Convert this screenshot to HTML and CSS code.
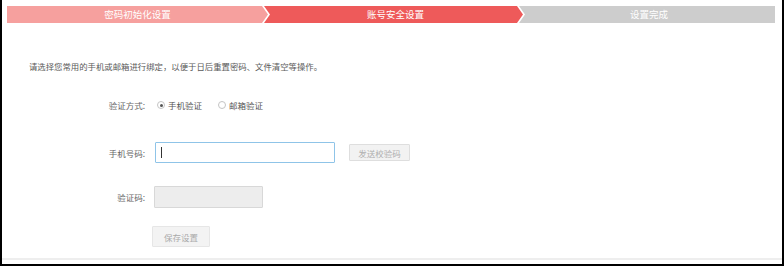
FILE: index.html
```html
<!DOCTYPE html>
<html lang="zh-CN">
<head>
<meta charset="utf-8">
<title>账号安全设置</title>
<link rel="stylesheet" href="styles.css">
</head>
<body>
<div class="frame">
  <div class="steps">
    <div class="step s1">密码初始化设置</div>
    <div class="step s2">账号安全设置</div>
    <div class="step s3">设置完成</div>
  </div>
  <p class="intro">请选择您常用的手机或邮箱进行绑定，以便于日后重置密码、文件清空等操作。</p>
  <div class="form">
    <div class="row r-method">
      <span class="lbl">验证方式:</span>
      <span class="radio on"></span><span class="rtext">手机验证</span>
      <span class="radio off"></span><span class="rtext">邮箱验证</span>
    </div>
    <div class="row r-phone">
      <span class="lbl">手机号码:</span>
      <div class="input phone"><span class="caret"></span></div>
      <button class="btn send">发送校验码</button>
    </div>
    <div class="row r-code">
      <span class="lbl">验证码:</span>
      <div class="input code"></div>
    </div>
    <div class="row r-save">
      <span class="lbl"></span>
      <button class="btn save">保存设置</button>
    </div>
  </div>
  <div class="rule"></div>
</div>
</body>
</html>
```
FILE: styles.css
```css
* { box-sizing: border-box; }
html, body { margin: 0; padding: 0; background: #fff; }
body { font-family: "Noto Sans CJK SC", "Noto Sans", sans-serif; }

.frame {
  width: 784px;
  height: 266px;
  border-left: 2px solid #000;
  border-right: 2px solid #000;
  border-bottom: 2px solid #000;
  padding-top: 6px;
  overflow: hidden;
}

.steps {
  display: flex;
  margin-left: 5px;
  height: 17px;
}
.step {
  height: 17px;
  color: #fff;
  font-size: 9.5px;
  line-height: 17px;
  text-align: center;
}
.s1 {
  width: 261px;
  background: #f6a09e;
  clip-path: polygon(0 0, calc(100% - 6px) 0, 100% 50%, calc(100% - 6px) 100%, 0 100%);
}
.s2 {
  width: 259px;
  margin-left: -4px;
  background: #ee5a5a;
  padding-left: 4px;
  clip-path: polygon(0 0, calc(100% - 6px) 0, 100% 50%, calc(100% - 6px) 100%, 0 100%, 6px 50%);
}
.s3 {
  width: 256px;
  margin-left: -4px;
  background: #cdcdcd;
  padding-left: 4px;
  clip-path: polygon(0 0, 100% 0, 100% 100%, 0 100%, 6px 50%);
}

.intro {
  margin: 37px 0 0 27px;
  font-size: 8.4px;
  line-height: 12px;
  color: #5a5a5a;
}

.form { display: flex; flex-direction: column; }
.row { display: flex; align-items: center; }
.lbl {
  width: 143px;
  text-align: right;
  font-size: 8.5px;
  line-height: 12px;
  color: #666;
}

.r-method { margin-top: 27px; height: 12px; }
.radio {
  width: 8px;
  height: 8px;
  border-radius: 50%;
  border: 1px solid #c4c4c4;
  background: #fff;
  position: relative;
}
.radio.on { margin-left: 12px; }
.radio.on::after {
  content: "";
  position: absolute;
  left: 1.5px; top: 1.5px;
  width: 3px; height: 3px;
  border-radius: 50%;
  background: #555;
}
.radio.off { margin-left: 16px; }
.rtext {
  margin-left: 3px;
  font-size: 8.5px;
  line-height: 12px;
  color: #555;
}

.r-phone { margin-top: 31px; height: 21px; }
.input { border: 1px solid #d8d8d8; border-radius: 1px; }
.phone {
  margin-left: 10px;
  width: 180px;
  height: 21px;
  border-color: #8fc4e8;
  display: flex;
  align-items: center;
  padding-left: 5px;
}
.caret { width: 1px; height: 11px; background: #333; }

.btn {
  font-family: inherit;
  font-size: 8.5px;
  line-height: 12px;
  color: #b0b0b0;
  background: #f2f2f2;
  border: 1px solid #dedede;
  border-radius: 1px;
  padding: 0;
}
.send { margin-left: 14px; width: 61px; height: 17px; }

.r-code { margin-top: 23px; height: 22px; }
.code {
  margin-left: 9px;
  width: 109px;
  height: 22px;
  background: #ededed;
}

.r-save { margin-top: 18px; height: 21px; }
.save {
  margin-left: 7px;
  width: 58px;
  height: 21px;
  background: #f3f3f3;
  border-color: #e6e6e6;
  color: #aaa;
}

.rule {
  margin-top: 11px;
  height: 2px;
  background: #eeeeee;
}
```
